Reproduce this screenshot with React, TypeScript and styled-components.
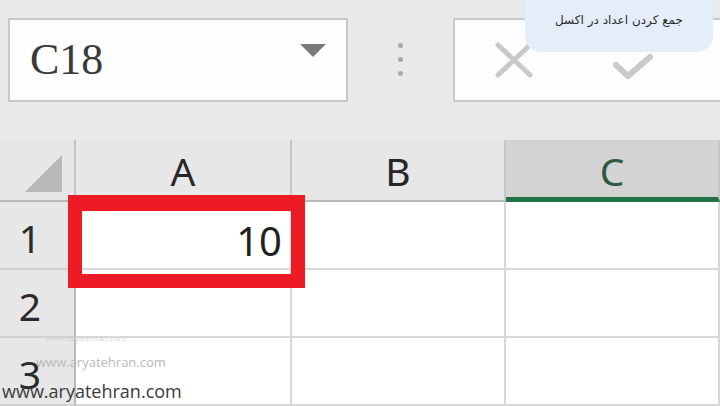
import React from 'react'
import styled, { createGlobalStyle } from 'styled-components'

const GlobalStyle = createGlobalStyle`
  html, body {
    margin: 0;
    padding: 0;
    background: #e9e9e9;
    overflow: hidden;
  }
  * {
    box-sizing: border-box;
  }
`;

const Page = styled.div`
  position: relative;
  width: 720px;
  height: 406px;
  overflow: hidden;
  display: flex;
  flex-direction: column;
  background: #e9e9e9;
  font-family: "Noto Sans", "Liberation Sans", sans-serif;
`;

const Toolbar = styled.div`
  height: 140px;
  flex-shrink: 0;
  display: flex;
  align-items: flex-start;
  padding: 18px 0 0 8px;
`;

const NameBox = styled.div`
  width: 340px;
  height: 84px;
  background: #fdfdfd;
  border: 2px solid #c9c9c9;
  display: flex;
  align-items: center;
  justify-content: space-between;
  padding: 0 20px 0 20px;
`;

const NameText = styled.span`
  font-family: "Liberation Serif", "DejaVu Serif", serif;
  font-size: 44px;
  color: #3a3a3a;
  margin-bottom: 2px;
`;

const DropArrow = styled.span`
  width: 0;
  height: 0;
  border-left: 13px solid transparent;
  border-right: 13px solid transparent;
  border-top: 13px solid #7a7a7a;
  margin-bottom: 20px;
`;

const Separator = styled.div`
  width: 105px;
  height: 84px;
  display: flex;
  flex-direction: column;
  align-items: center;
  padding-top: 25px;
  gap: 9px;
`;

const Dot = styled.span`
  width: 5px;
  height: 5px;
  border-radius: 50%;
  background: #a9a9a9;
`;

const FormulaBox = styled.div`
  flex: 1;
  margin-right: -20px;
  height: 84px;
  background: #fdfdfd;
  border: 2px solid #c9c9c9;
  display: flex;
  align-items: center;
  padding-left: 40px;
  gap: 80px;
`;

const IconSlot = styled.span<{ $shift: number }>`
  display: flex;
  margin-top: ${(p) => p.$shift}px;
`;

const Tooltip = styled.div`
  position: absolute;
  top: 0;
  left: 525px;
  width: 188px;
  height: 52px;
  background: #e4eef9;
  border-radius: 0 0 16px 16px;
  display: flex;
  justify-content: center;
  padding-top: 13px;
  font-family: "DejaVu Sans", "Noto Sans", sans-serif;
  font-size: 12px;
  color: #2a2a2a;
`;

const Sheet = styled.div`
  display: grid;
  grid-template-columns: 76px 216px 214px 214px;
  grid-template-rows: 62px 68px 68px 68px;
`;

const Corner = styled.div`
  background: #e7e7e7;
  border-right: 2px solid #c2c2c2;
  border-bottom: 2px solid #b9b9b9;
  display: flex;
  justify-content: flex-end;
  align-items: flex-end;
  padding: 0 12px 8px 0;
`;

const ColHeader = styled.div<{ $active?: boolean }>`
  background: ${(p) => (p.$active ? '#d3d3d3' : '#e7e7e7')};
  border-right: 2px solid #c6c6c6;
  border-bottom: ${(p) => (p.$active ? '5px solid #217346' : '2px solid #b9b9b9')};
  display: flex;
  align-items: center;
  justify-content: center;
  padding-top: ${(p) => (p.$active ? '3px' : '0')};
  font-size: 39px;
  color: ${(p) => (p.$active ? '#2e5a43' : '#262626')};
`;

const RowHeader = styled.div`
  background: #e7e7e7;
  border-right: 2px solid #b9b9b9;
  border-bottom: 2px solid #d0d0d0;
  display: flex;
  align-items: center;
  justify-content: center;
  padding: 4px 14px 0 0;
  font-size: 39px;
  color: #2b2b2b;
`;

const Cell = styled.div`
  position: relative;
  background: #ffffff;
  border-right: 2px solid #d8d8d8;
  border-bottom: 2px solid #d8d8d8;
  display: flex;
  align-items: center;
  justify-content: flex-end;
  padding: 10px 8px 0 0;
  font-size: 40px;
  color: #1f1f1f;
`;

const Highlight = styled.div`
  position: absolute;
  left: -8px;
  top: -7px;
  width: 237px;
  height: 93px;
  border: 14px solid #ed1c24;
  border-top-width: 16px;
  z-index: 2;
  pointer-events: none;
`;

const Watermark = styled.div<{ $size: number; $color: string }>`
  position: absolute;
  font-family: "Open Sans", "Noto Sans", sans-serif;
  font-size: ${(p) => p.$size}px;
  color: ${(p) => p.$color};
  white-space: nowrap;
  z-index: 3;
`;

const CancelIcon = () => (
  <svg width="38" height="36" viewBox="0 0 38 36">
    <path d="M3 3 L35 33 M35 3 L3 33" stroke="#c9c9c9" strokeWidth="5" strokeLinecap="round" fill="none" />
  </svg>
);

const EnterIcon = () => (
  <svg width="40" height="28" viewBox="0 0 40 28">
    <path d="M3 12 L15 23 L37 4" stroke="#c9c9c9" strokeWidth="6" strokeLinecap="round" strokeLinejoin="round" fill="none" />
  </svg>
);

const CornerTriangle = () => (
  <svg width="37" height="37" viewBox="0 0 37 37">
    <polygon points="37,0 37,37 0,37" fill="#b8b8b8" />
  </svg>
);

const columns = ['A', 'B', 'C'];
const rows = [1, 2, 3];

export default function App() {
  return (
    <>
      <GlobalStyle />
      <Page>
        <Toolbar>
          <NameBox>
            <NameText>C18</NameText>
            <DropArrow />
          </NameBox>
          <Separator>
            <Dot />
            <Dot />
            <Dot />
          </Separator>
          <FormulaBox>
            <IconSlot $shift={0}>
              <CancelIcon />
            </IconSlot>
            <IconSlot $shift={14}>
              <EnterIcon />
            </IconSlot>
          </FormulaBox>
        </Toolbar>

        <Sheet>
          <Corner>
            <CornerTriangle />
          </Corner>
          {columns.map((c) => (
            <ColHeader key={c} $active={c === 'C'}>
              {c}
            </ColHeader>
          ))}
          {rows.map((r) => (
            <React.Fragment key={r}>
              <RowHeader>{r}</RowHeader>
              {columns.map((c) => (
                <Cell key={c}>
                  {r === 1 && c === 'A' && (
                    <>
                      10
                      <Highlight />
                    </>
                  )}
                </Cell>
              ))}
            </React.Fragment>
          ))}
        </Sheet>

        <Tooltip dir="rtl">جمع کردن اعداد در اکسل</Tooltip>

        <Watermark $size={8} $color="#d2d2d2" style={{ left: 46, top: 332 }}>
          www.aryatehran.com
        </Watermark>
        <Watermark $size={13} $color="#b9b9b9" style={{ left: 36, top: 353 }}>
          www.aryatehran.com
        </Watermark>
        <Watermark $size={18} $color="#3b3b3b" style={{ left: 2, top: 379 }}>
          www.aryatehran.com
        </Watermark>
      </Page>
    </>
  )
}
